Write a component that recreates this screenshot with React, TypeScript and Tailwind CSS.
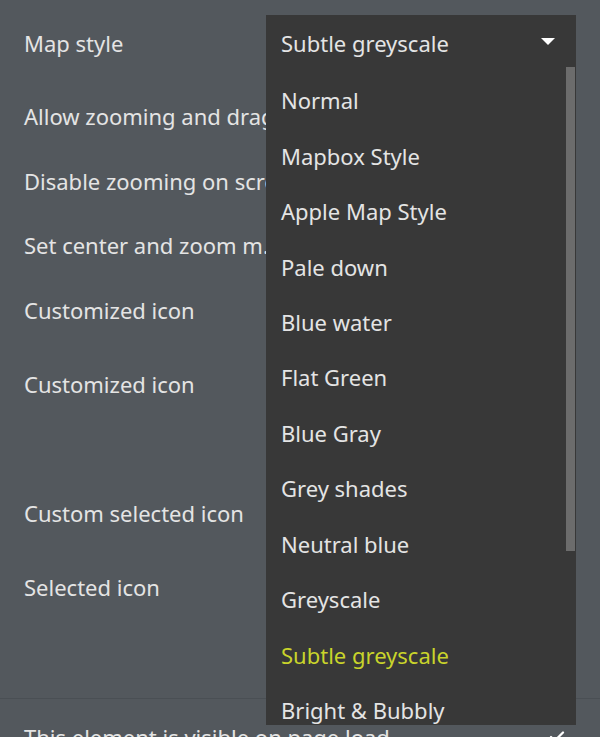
import { Check } from 'lucide-react';

const styles = [
  'Normal',
  'Mapbox Style',
  'Apple Map Style',
  'Pale down',
  'Blue water',
  'Flat Green',
  'Blue Gray',
  'Grey shades',
  'Neutral blue',
  'Greyscale',
  'Subtle greyscale',
  'Bright & Bubbly',
];

const selected = 'Subtle greyscale';

export default function App() {
  return (
    <div
      className="relative h-[737px] w-[600px] overflow-hidden bg-[#53585d] text-[22px] text-[#e4e4e4]"
      style={{ fontFamily: '"Noto Sans", "Open Sans", sans-serif' }}
    >
      {/* property rows */}
      <div className="flex flex-col px-6">
        <div className="flex h-[86px] items-center whitespace-nowrap">Map style</div>
        <div className="flex h-[60px] items-center whitespace-nowrap">Allow zooming and dragging</div>
        <div className="flex h-[70px] items-center whitespace-nowrap">Disable zooming on scroll</div>
        <div className="flex h-[58px] items-center whitespace-nowrap">Set center and zoom m...</div>
        <div className="flex h-[72px] items-center whitespace-nowrap">Customized icon</div>
        <div className="flex h-[76px] items-center whitespace-nowrap">Customized icon</div>
        <div className="h-[61px]" />
        <div className="flex h-[60px] items-center whitespace-nowrap">Custom selected icon</div>
        <div className="flex h-[88px] items-center whitespace-nowrap">Selected icon</div>
        <div className="h-[67px]" />
      </div>
      <div className="border-t border-[#4a4f54]">
        <div className="flex h-[76px] items-center justify-between pl-6 pr-[34px]">
          <span className="whitespace-nowrap">This element is visible on page load</span>
          <Check size={18} strokeWidth={3} className="text-white" />
        </div>
      </div>

      {/* open dropdown */}
      <div className="absolute left-[266px] top-[15px] flex h-[710px] w-[310px] flex-col bg-[#383838]">
        <div className="flex h-[52px] shrink-0 items-center justify-between pl-[15px] pr-[20px] pt-[4px]">
          <span className="whitespace-nowrap">{selected}</span>
          <svg width="16" height="8" viewBox="0 0 16 8" className="-mt-[2px]">
            <path d="M1 0 L15 0 L8 7 Z" fill="#ffffff" />
          </svg>
        </div>
        <div className="flex min-h-0 flex-1">
          <div className="flex-1 overflow-hidden pt-[6px]">
            {styles.map((s) => (
              <div
                key={s}
                className={`flex h-[55.45px] items-center whitespace-nowrap pl-[15px] ${
                  s === selected ? 'text-[#c9d42b]' : ''
                }`}
              >
                {s}
              </div>
            ))}
          </div>
          <div className="w-[10px] shrink-0">
            <div className="h-[484px] w-[9px] bg-[#6c6c6c]" />
          </div>
        </div>
      </div>
    </div>
  );
}
